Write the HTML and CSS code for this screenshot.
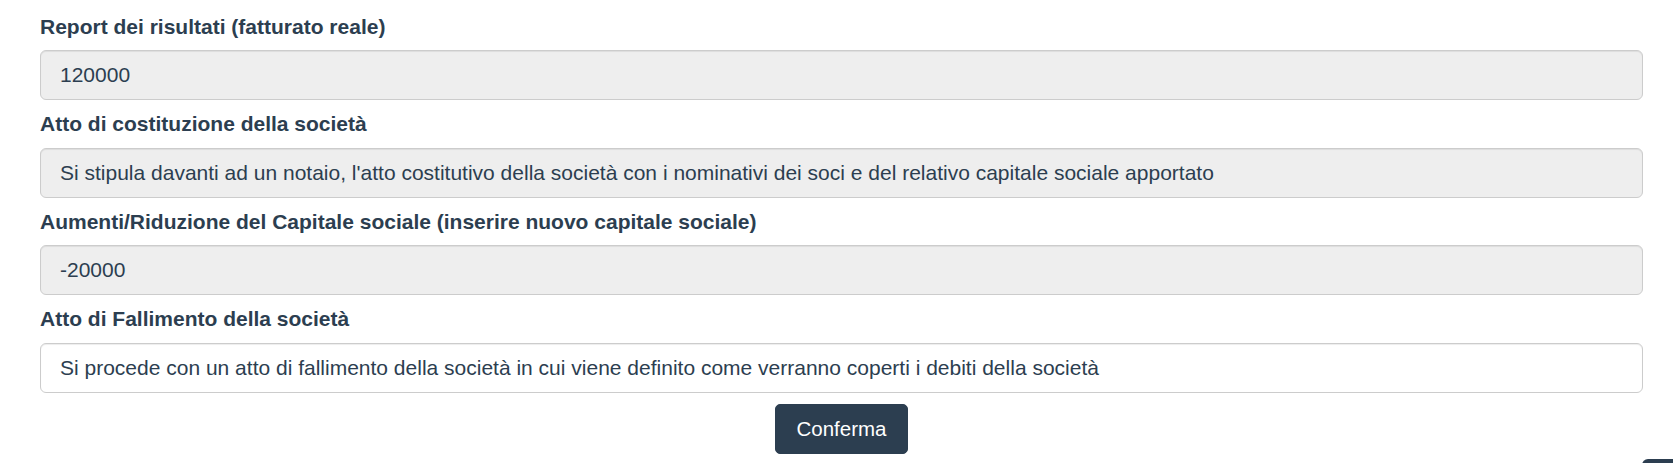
FILE: index.html
```html
<!DOCTYPE html>
<html lang="it">
<head>
<meta charset="utf-8">
<title>Report</title>
<link rel="stylesheet" href="styles.css">
</head>
<body>
<main class="form">
  <div class="group">
    <div class="label">Report dei risultati (fatturato reale)</div>
    <div class="field readonly">120000</div>
  </div>
  <div class="group">
    <div class="label">Atto di costituzione della società</div>
    <div class="field readonly">Si stipula davanti ad un notaio, l'atto costitutivo della società con i nominativi dei soci e del relativo capitale sociale apportato</div>
  </div>
  <div class="group">
    <div class="label">Aumenti/Riduzione del Capitale sociale (inserire nuovo capitale sociale)</div>
    <div class="field readonly">-20000</div>
  </div>
  <div class="group">
    <div class="label">Atto di Fallimento della società</div>
    <div class="field">Si procede con un atto di fallimento della società in cui viene definito come verranno coperti i debiti della società</div>
  </div>
  <div class="actions">
    <button class="btn" type="button">Conferma</button>
  </div>
</main>
<div class="to-top"></div>
</body>
</html>
```
FILE: styles.css
```css
html, body {
  margin: 0;
  padding: 0;
  background: #fff;
}
body {
  font-family: "Liberation Sans", Arial, sans-serif;
  color: #2c3e50;
}
.form {
  padding: 13.5px 30px 0 40px;
  display: flex;
  flex-direction: column;
}
.group {
  display: flex;
  flex-direction: column;
  margin-bottom: 11px;
}
.group:last-of-type {
  margin-bottom: 9px;
}
.label {
  font-size: 21px;
  font-weight: bold;
  line-height: 26px;
  margin-bottom: 10.5px;
  color: #2c3e50;
}
.field {
  box-sizing: border-box;
  height: 50px;
  padding: 0 19px;
  font-size: 21px;
  line-height: 48px;
  color: #2c3e50;
  background: #fff;
  border: 1px solid #ccc;
  border-radius: 6px;
  box-shadow: inset 0 1px 1px rgba(0,0,0,0.075);
  white-space: nowrap;
  overflow: hidden;
}
.field.readonly {
  background: #eee;
}
.actions {
  display: flex;
  justify-content: center;
}
.btn {
  font-family: "Liberation Sans", Arial, sans-serif;
  font-size: 20.5px;
  line-height: 28px;
  padding: 10px 20px;
  color: #fff;
  background: #2c3e50;
  border: 1px solid #2c3e50;
  border-radius: 5px;
  cursor: pointer;
}
.to-top {
  position: fixed;
  left: 1642px;
  top: 459px;
  width: 44px;
  height: 44px;
  background: #2c3e50;
  border-radius: 6px;
}
```
